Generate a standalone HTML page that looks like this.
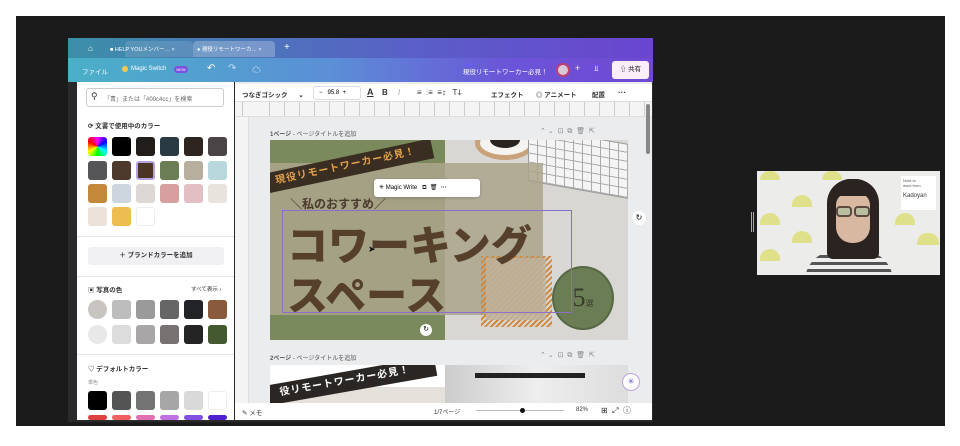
<!DOCTYPE html><html><head><meta charset="utf-8"><style>
*{box-sizing:border-box;margin:0;padding:0}
body{width:960px;height:446px;background:#fff;position:relative;overflow:hidden;font-family:"Liberation Sans","Noto Sans CJK JP",sans-serif;}
.a{position:absolute}
.sw{position:absolute;width:19px;height:19px;border-radius:3px}
.t{position:absolute;font-size:7px;color:#333;white-space:nowrap}
</style></head><body>
<div class="a" style="left:16px;top:16px;width:929px;height:410px;background:#1b1b1b"></div>
<!-- window -->
<div class="a" style="left:68px;top:38px;width:585px;height:384px;background:#2a2a2c"></div>
<div class="a" style="left:68px;top:38px;width:585px;height:20px;background:linear-gradient(90deg,#3b8fa8,#5a5ec8 60%,#6a45cf)"></div>
<div class="a" style="left:125px;top:41px;width:68px;height:16px;background:rgba(255,255,255,.12);border-radius:4px 4px 0 0"></div>
<div class="a" style="left:193px;top:41px;width:82px;height:16px;background:rgba(255,255,255,.25);border-radius:4px 4px 0 0"></div>
<div class="t" style="left:88px;top:44px;color:#fff;font-size:8px">⌂</div>
<div class="t" style="left:110px;top:45px;color:#fff;font-size:5.5px">■ HELP YOUメンバー… ×</div>
<div class="t" style="left:197px;top:45px;color:#fff;font-size:5.5px">● 現役リモートワーカ… ×</div>
<div class="t" style="left:284px;top:42px;color:#fff;font-size:10px">+</div>
<div class="a" style="left:68px;top:58px;width:585px;height:24px;background:linear-gradient(90deg,#4ab0c8,#5b8fd6 45%,#6b55d8 75%,#7048d2)"></div>
<div class="t" style="left:82px;top:66px;color:#fff;font-size:6.5px">ファイル</div>
<div class="a" style="left:122px;top:66px;width:6px;height:6px;border-radius:50%;background:#f2c94c"></div>
<div class="t" style="left:131px;top:66px;color:#fff;font-size:6px">Magic Switch</div>
<div class="a" style="left:174px;top:66px;width:14px;height:7px;border-radius:4px;background:#7b4fe0;color:#fff;font-size:4px;text-align:center;line-height:7px">NEW</div>
<div class="t" style="left:207px;top:63px;color:#fff;font-size:10px">↶</div>
<div class="t" style="left:228px;top:63px;color:#cde;font-size:10px">↷</div>
<div class="t" style="left:252px;top:63px;color:#fff;font-size:9px">☁</div>
<div class="t" style="left:463px;top:66px;color:#fff;font-size:6.5px">現役リモートワーカー必見！</div>
<div class="a" style="left:556px;top:63px;width:14px;height:14px;border-radius:50%;background:#d8c8d8;border:2px solid #c04070"></div>
<div class="t" style="left:575px;top:63px;color:#fff;font-size:9px">+</div>
<div class="t" style="left:594px;top:64px;color:#fff;font-size:8px">⫫</div>
<div class="a" style="left:612px;top:61px;width:37px;height:18px;background:#fbeefa;border-radius:3px;font-size:6.5px;color:#222;line-height:18px;text-align:center">⇧ 共有</div>
<!-- left panel -->
<div class="a" style="left:77px;top:82px;width:157px;height:338px;background:#fff"></div>
<div class="a" style="left:86px;top:88px;width:138px;height:19px;border:1px solid #ccc;border-radius:3px"></div>
<div class="t" style="left:91px;top:91px;font-size:9px">⚲</div>
<div class="t" style="left:104px;top:94px;font-size:6px;color:#666">「青」または「#00c4cc」を検索</div>
<div class="t" style="left:88px;top:120px;font-size:6.5px;font-weight:bold">⟳ 文書で使用中のカラー</div>
<div class="sw" style="left:88px;top:137px;background:conic-gradient(#f0f,#00f,#0ff,#0f0,#ff0,#f00,#f0f)"></div>
<div class="sw" style="left:112px;top:137px;background:#000"></div>
<div class="sw" style="left:136px;top:137px;background:#211d1b"></div>
<div class="sw" style="left:160px;top:137px;background:#2a3a42"></div>
<div class="sw" style="left:184px;top:137px;background:#2e2420"></div>
<div class="sw" style="left:208px;top:137px;background:#4a4446"></div>
<div class="sw" style="left:88px;top:161px;background:#555557"></div>
<div class="sw" style="left:112px;top:161px;background:#4d3a2c"></div>
<div class="sw" style="left:136px;top:161px;background:#4a3522;border:2px solid #b9a0e0"></div>
<div class="sw" style="left:160px;top:161px;background:#6b7d55"></div>
<div class="sw" style="left:184px;top:161px;background:#b7ae9e"></div>
<div class="sw" style="left:208px;top:161px;background:#b9d8dc"></div>
<div class="sw" style="left:88px;top:184px;background:#c4883a"></div>
<div class="sw" style="left:112px;top:184px;background:#cdd5df"></div>
<div class="sw" style="left:136px;top:184px;background:#ddd8d4"></div>
<div class="sw" style="left:160px;top:184px;background:#d7a0a0"></div>
<div class="sw" style="left:184px;top:184px;background:#e3bfc3"></div>
<div class="sw" style="left:208px;top:184px;background:#e8e3dc"></div>
<div class="sw" style="left:88px;top:207px;background:#ece2da"></div>
<div class="sw" style="left:112px;top:207px;background:#edbd50"></div>
<div class="sw" style="left:136px;top:207px;background:#fff;border:1px solid #eee"></div>
<div class="a" style="left:77px;top:236px;width:157px;height:1px;background:#e6e6e6"></div>
<div class="a" style="left:88px;top:247px;width:136px;height:18px;background:#f0f0f2;border-radius:3px;font-size:6.5px;text-align:center;line-height:18px;color:#333;font-weight:bold">＋ ブランドカラーを追加</div>
<div class="a" style="left:77px;top:276px;width:157px;height:1px;background:#e6e6e6"></div>
<div class="t" style="left:88px;top:284px;font-size:6.5px;font-weight:bold">▣ 写真の色</div>
<div class="t" style="left:191px;top:285px;font-size:5.5px">すべて表示 ›</div>
<div class="sw" style="left:88px;top:300px;border-radius:50%;background:#c8c4c0"></div>
<div class="sw" style="left:112px;top:300px;background:#bdbdbd"></div>
<div class="sw" style="left:136px;top:300px;background:#9a9a9a"></div>
<div class="sw" style="left:160px;top:300px;background:#666"></div>
<div class="sw" style="left:184px;top:300px;background:#222326"></div>
<div class="sw" style="left:208px;top:300px;background:#8a5a3c"></div>
<div class="sw" style="left:88px;top:325px;border-radius:50%;background:#e8e8e8"></div>
<div class="sw" style="left:112px;top:325px;background:#dcdcdc"></div>
<div class="sw" style="left:136px;top:325px;background:#a8a6a6"></div>
<div class="sw" style="left:160px;top:325px;background:#767272"></div>
<div class="sw" style="left:184px;top:325px;background:#252424"></div>
<div class="sw" style="left:208px;top:325px;background:#44592f"></div>
<div class="a" style="left:77px;top:354px;width:157px;height:1px;background:#e6e6e6"></div>
<div class="t" style="left:88px;top:363px;font-size:6.5px;font-weight:bold">♡ デフォルトカラー</div>
<div class="t" style="left:88px;top:379px;font-size:5px;color:#888">単色</div>
<div class="sw" style="left:88px;top:391px;background:#000"></div>
<div class="sw" style="left:112px;top:391px;background:#545454"></div>
<div class="sw" style="left:136px;top:391px;background:#737373"></div>
<div class="sw" style="left:160px;top:391px;background:#a6a6a6"></div>
<div class="sw" style="left:184px;top:391px;background:#d9d9d9"></div>
<div class="sw" style="left:208px;top:391px;background:#fff;border:1px solid #eee"></div>
<div class="sw" style="left:88px;top:415px;height:5px;background:#e04040"></div>
<div class="sw" style="left:112px;top:415px;height:5px;background:#f06060"></div>
<div class="sw" style="left:136px;top:415px;height:5px;background:#e070b0"></div>
<div class="sw" style="left:160px;top:415px;height:5px;background:#c070e0"></div>
<div class="sw" style="left:184px;top:415px;height:5px;background:#8050e0"></div>
<div class="sw" style="left:208px;top:415px;height:5px;background:#5020d0"></div>
<!-- canvas area -->
<div class="a" style="left:235px;top:82px;width:417px;height:338px;background:#ebecee"></div>
<div class="a" style="left:235px;top:84px;width:417px;height:18px;background:#fff;border-bottom:1px solid #ddd"></div>
<div class="t" style="left:242px;top:89px;font-size:6.5px;font-weight:bold">つなぎゴシック&nbsp;&nbsp;&nbsp;&nbsp;&nbsp;&nbsp;⌄</div>
<div class="a" style="left:313px;top:86px;width:48px;height:14px;border:1px solid #ddd;border-radius:3px;font-size:6px;line-height:12px;padding-left:5px">−&nbsp;&nbsp;&nbsp;95.8&nbsp;&nbsp;+</div>
<div class="t" style="left:367px;top:87px;font-size:9px;font-weight:bold;text-decoration:underline">A</div>
<div class="t" style="left:382px;top:88px;font-size:8px;font-weight:bold">B</div>
<div class="t" style="left:398px;top:88px;font-size:8px;color:#aaa;font-style:italic">I</div>
<div class="t" style="left:417px;top:88px;font-size:8px">≡&nbsp;&nbsp;⁝≡&nbsp;&nbsp;≡↕&nbsp;&nbsp;&nbsp;Tↆ</div>
<div class="t" style="left:491px;top:89px;font-size:6.5px;font-weight:bold">エフェクト</div>
<div class="t" style="left:536px;top:89px;font-size:6.5px;font-weight:bold">◎ アニメート</div>
<div class="t" style="left:592px;top:89px;font-size:6.5px;font-weight:bold">配置</div>
<div class="t" style="left:618px;top:88px;font-size:8px;font-weight:bold">···</div>
<div class="a" style="left:235px;top:102px;width:417px;height:15px;background:#f4f4f5;border-bottom:1px solid #ddd;background-image:repeating-linear-gradient(90deg,transparent 0 14px,#ccc 14px 15px);background-position:20px 0"></div>
<div class="a" style="left:235px;top:117px;width:14px;height:303px;background:#f4f4f5;border-right:1px solid #ddd"></div>
<div class="a" style="left:646px;top:104px;width:4px;height:50px;background:#888;border-radius:2px"></div>
<div class="t" style="left:270px;top:129px;font-size:6px;color:#555"><b>1ページ</b> - ページタイトルを追加</div>
<div class="t" style="left:540px;top:127px;font-size:7px;color:#888">⌃ ⌄ &nbsp;⊡ &nbsp;⧉ &nbsp;🗑 &nbsp;⇱</div>
<!-- page 1 -->
<div class="a" style="left:270px;top:140px;width:358px;height:200px;background:#d8d7d3;overflow:hidden">
 <div class="a" style="left:0;top:0;width:175px;height:200px;background:#7a8a5c"></div>
 <div class="a" style="left:205px;top:-14px;width:60px;height:34px;border-radius:50%;background:#f5f3ef;border:5px solid #c9a27a"></div>
 <div class="a" style="left:220px;top:-8px;width:30px;height:16px;border-radius:50%;background:#2a2420"></div>
 <div class="a" style="left:258px;top:-4px;width:110px;height:55px;background-color:#a8a8a8;background-image:linear-gradient(#f2f2f2,#f2f2f2);transform:skewY(10deg);border:1px solid #999;background:repeating-linear-gradient(90deg,#f4f4f4 0 8px,#aaa 8px 9px),#eee"></div>
 <div class="a" style="left:258px;top:-4px;width:110px;height:55px;transform:skewY(10deg);background:repeating-linear-gradient(180deg,transparent 0 8px,#aaa 8px 9px)"></div>
 <div class="a" style="left:0;top:23px;width:273px;height:152px;background:rgba(172,164,140,.85)"></div>
 <div class="a" style="left:211px;top:116px;width:71px;height:71px;background:repeating-linear-gradient(135deg,#d08a40 0 2px,transparent 2px 4px)"></div>
 <div class="a" style="left:216px;top:118px;width:60px;height:62px;background:rgba(190,180,160,.8)"></div>
 <div class="a" style="left:282px;top:126px;width:62px;height:64px;border-radius:50%;background:#6b7d55;border:2px solid #566843;color:#3a3a2a;font-family:'Liberation Serif',serif;font-size:26px;text-align:center;line-height:60px">5<span style="font-size:8px">選</span></div>
 <div class="a" style="left:0;top:33px;width:168px;height:20px;background:#3a2d22;transform:rotate(-12deg);transform-origin:0 100%;color:#e3a24a;font-size:10px;font-weight:bold;line-height:20px;padding-left:8px;white-space:nowrap;letter-spacing:1px">現役リモートワーカー必見！</div>
 <div class="t" style="left:20px;top:55px;font-size:12px;font-weight:bold;color:#4a3a2c">＼私のおすすめ／</div>
 <div class="t" style="left:17px;top:72px;font-size:41px;font-weight:900;color:#56402c">コワーキング</div>
 <div class="t" style="left:17px;top:122px;font-size:41px;font-weight:900;color:#56402c">スペース</div>
 <div class="a" style="left:12px;top:70px;width:290px;height:103px;border:1px solid #8c6fc8"></div>
 <div class="a" style="left:150px;top:184px;width:12px;height:12px;border-radius:50%;background:#fff;font-size:7px;text-align:center;line-height:12px">↻</div>
</div>
<div class="a" style="left:374px;top:179px;width:106px;height:18px;background:#fff;border-radius:3px;box-shadow:0 1px 3px rgba(0,0,0,.2);font-size:6px;line-height:18px;padding-left:5px;white-space:nowrap">✳ Magic Write &nbsp;&nbsp;⧉ &nbsp;🗑 &nbsp;<b>···</b></div>
<div class="a" style="left:632px;top:211px;width:14px;height:14px;border-radius:50%;background:#fff;font-size:8px;text-align:center;line-height:14px">↻</div>
<div class="t" style="left:368px;top:244px;font-size:9px;color:#111">➤</div>
<!-- page 2 -->
<div class="t" style="left:270px;top:353px;font-size:6px;color:#555"><b>2ページ</b> - ページタイトルを追加</div>
<div class="t" style="left:540px;top:351px;font-size:7px;color:#888">⌃ ⌄ &nbsp;⊡ &nbsp;⧉ &nbsp;🗑 &nbsp;⇱</div>
<div class="a" style="left:270px;top:365px;width:358px;height:38px;background:#fff;overflow:hidden">
 <div class="a" style="left:0;top:22px;width:175px;height:20px;background:#e4e0da"></div>
 <div class="a" style="left:175px;top:0;width:183px;height:38px;background:linear-gradient(90deg,#ccc,#eee 50%,#ddd)"></div>
 <div class="a" style="left:205px;top:8px;width:110px;height:5px;background:#222"></div>
 <div class="a" style="left:-10px;top:22px;width:180px;height:20px;background:#2a2624;transform:rotate(-10deg);transform-origin:0 100%;color:#fff;font-size:10px;font-weight:bold;line-height:20px;padding-left:22px;white-space:nowrap;letter-spacing:1px">役リモートワーカー必見！</div>
</div>
<div class="a" style="left:622px;top:373px;width:18px;height:18px;border-radius:50%;background:#fff;border:1px solid #b9a0e0;font-size:8px;text-align:center;line-height:16px;color:#6a45cf">✳</div>
<!-- bottom bar -->
<div class="a" style="left:235px;top:403px;width:417px;height:17px;background:#fff"></div>
<div class="t" style="left:242px;top:407px;font-size:6.5px">✎ メモ</div>
<div class="t" style="left:434px;top:407px;font-size:6px">1/7ページ</div>
<div class="a" style="left:476px;top:410px;width:88px;height:1px;background:#bbb"></div>
<div class="a" style="left:520px;top:408px;width:5px;height:5px;border-radius:50%;background:#111"></div>
<div class="t" style="left:576px;top:407px;font-size:6px">82%</div>
<div class="t" style="left:601px;top:405px;font-size:8px">⊞ &nbsp;⤢ &nbsp;ⓘ</div>
<!-- video -->
<div class="a" style="left:757px;top:171px;width:183px;height:104px;background:#ececea;overflow:hidden">
 <div class="a" style="left:3px;top:0;width:20px;height:9px;border-radius:10px 10px 0 0;background:#dfe08a"></div>
 <div class="a" style="left:35px;top:24px;width:20px;height:12px;border-radius:10px 10px 0 0;background:#dfe08a"></div>
 <div class="a" style="left:3px;top:42px;width:20px;height:12px;border-radius:10px 10px 0 0;background:#dfe08a"></div>
 <div class="a" style="left:35px;top:60px;width:20px;height:12px;border-radius:10px 10px 0 0;background:#dfe08a"></div>
 <div class="a" style="left:3px;top:78px;width:20px;height:12px;border-radius:10px 10px 0 0;background:#dfe08a"></div>
 <div class="a" style="left:65px;top:0;width:20px;height:9px;border-radius:10px 10px 0 0;background:#dfe08a"></div>
 <div class="a" style="left:138px;top:42px;width:20px;height:12px;border-radius:10px 10px 0 0;background:#dfe08a"></div>
 <div class="a" style="left:160px;top:62px;width:22px;height:12px;border-radius:10px 10px 0 0;background:#dfe08a"></div>
 <div class="a" style="left:48px;top:80px;width:88px;height:30px;border-radius:30px 30px 0 0;background:repeating-linear-gradient(180deg,#eee 0 4px,#555 4px 7px)"></div>
 <div class="a" style="left:70px;top:8px;width:52px;height:80px;border-radius:24px 24px 6px 6px;background:#2b2320"></div>
 <div class="a" style="left:79px;top:22px;width:34px;height:50px;border-radius:12px 12px 16px 16px;background:#d8b8a0"></div>
 <div class="a" style="left:77px;top:8px;width:38px;height:17px;border-radius:16px 16px 0 0;background:#2b2320"></div>
 <div class="a" style="left:79px;top:35px;width:16px;height:11px;border:2px solid #5a4a40;border-radius:4px;background:rgba(140,200,160,.4)"></div>
 <div class="a" style="left:97px;top:35px;width:16px;height:11px;border:2px solid #5a4a40;border-radius:4px;background:rgba(140,200,160,.4)"></div>
 <div class="a" style="left:144px;top:5px;width:35px;height:34px;background:#fff;font-size:4px;color:#555;padding:2px">Note to<br>work from<br><br><span style="font-size:6px;color:#333">Kadoyan</span></div>
</div>
<div class="a" style="left:751px;top:212px;width:3px;height:20px;border-left:1px solid #aaa;border-right:1px solid #aaa"></div>
</body></html>
